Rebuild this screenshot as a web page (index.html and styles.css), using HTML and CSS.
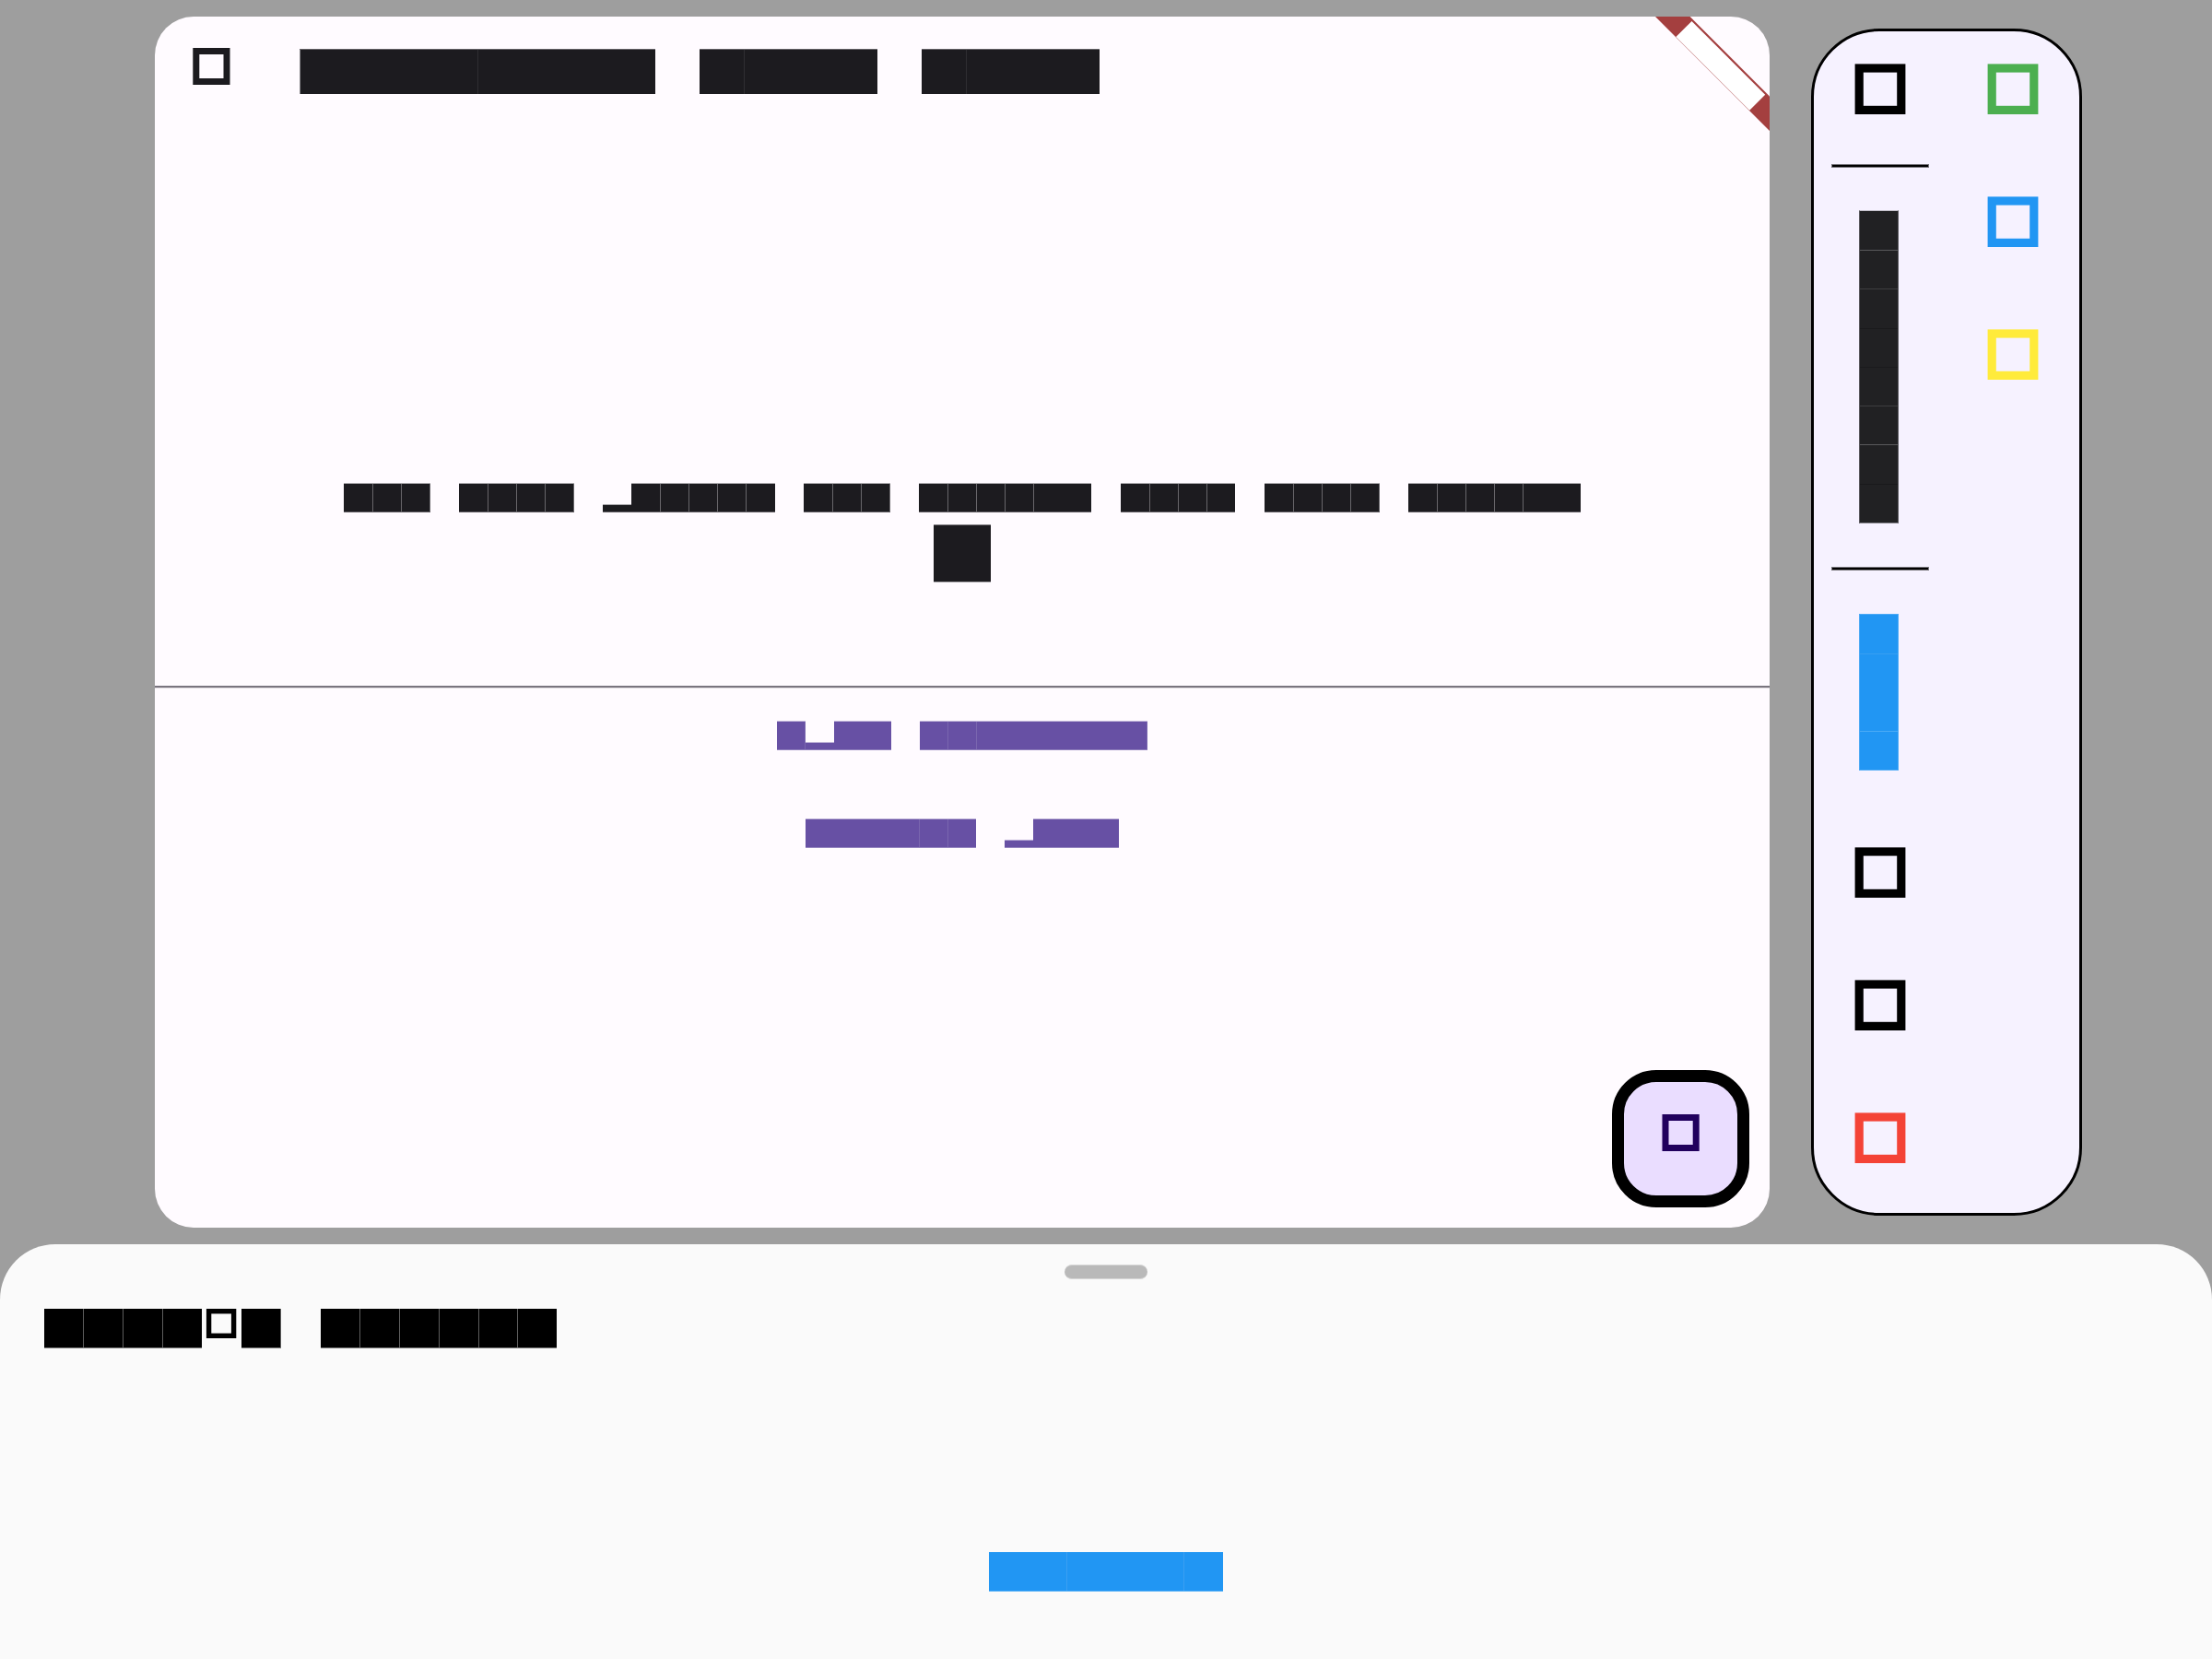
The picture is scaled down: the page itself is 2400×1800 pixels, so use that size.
FILE: index.html
```html
<!DOCTYPE html>
<html lang="en">
<head>
<meta charset="utf-8">
<title>Preview</title>
<link rel="stylesheet" href="styles.css">
</head>
<body>
<main class="stage">
  <section class="card">
    <header class="appbar">
      <svg class="lead" width="42" height="40"><rect x="3.8" y="3.5" width="33.2" height="33" fill="none" stroke="#1c1b1f" stroke-width="7"/></svg>
      <div class="line title">
        <span class="run n8 seam-mid"></span>
        <span class="run n4 seam-first"></span>
        <span class="run n4 seam-first"></span>
      </div>
    </header>
    <div class="line message">
      <span class="run n3"></span>
      <span class="run n4"></span>
      <span class="word"><span class="run low n1"></span><span class="run n5"></span></span>
      <span class="run n3"></span>
      <span class="run n6"></span>
      <span class="run n4"></span>
      <span class="run n4"></span>
      <span class="run n6"></span>
    </div>
    <div class="counter"></div>
    <div class="divider"></div>
    <div class="line action first">
      <span class="word"><span class="run n1"></span><span class="run low plain n1"></span><span class="run plain n2"></span></span>
      <span class="word"><span class="run n3"></span><span class="run plain n4 open"></span><span class="run n1"></span></span>
    </div>
    <div class="line action">
      <span class="word"><span class="run plain n3"></span><span class="run n3"></span></span>
      <span class="word"><span class="run low plain n1"></span><span class="run plain n3"></span></span>
    </div>
    <svg class="ribbon" width="124" height="124">
      <path d="M0 0H37.6L124 86.4V124Z" fill="#a43f3f"/>
      <path d="M22.4 21.9L39.5 4.9L119.2 84.8L102.2 101.8Z" fill="#fff"/>
    </svg>
    <button class="fab">
      <svg width="42" height="40"><rect x="4" y="3.5" width="33.2" height="33" fill="none" stroke="#21005d" stroke-width="7"/></svg>
    </button>
  </section>

  <aside class="panel">
    <div class="column">
      <svg class="tool" viewBox="0 0 56 56"><rect x="5.2" y="5" width="45.6" height="45.4"/></svg>
      <div class="rule"></div>
      <div class="label dark"><i></i><i class="s3"></i><i class="s2"></i><i class="s1"></i><i class="s1"></i><i class="s2"></i><i class="s3"></i><i class="s1"></i></div>
      <div class="rule"></div>
      <div class="label blue"><i></i><i class="s2"></i><i></i><i class="s3"></i></div>
      <div class="tools">
        <svg class="tool" viewBox="0 0 56 56"><rect x="5.2" y="5" width="45.6" height="45.4"/></svg>
        <svg class="tool" viewBox="0 0 56 56"><rect x="5.2" y="5" width="45.6" height="45.4"/></svg>
        <svg class="tool red" viewBox="0 0 56 56"><rect x="5.2" y="5" width="45.6" height="45.4"/></svg>
      </div>
    </div>
    <div class="column tools">
      <svg class="tool green" viewBox="0 0 56 56"><rect x="5.2" y="5" width="45.6" height="45.4"/></svg>
      <svg class="tool sky" viewBox="0 0 56 56"><rect x="5.2" y="5" width="45.6" height="45.4"/></svg>
      <svg class="tool yellow" viewBox="0 0 56 56"><rect x="5.2" y="5" width="45.6" height="45.4"/></svg>
    </div>
  </aside>
</main>

<section class="sheet">
  <div class="handle"></div>
  <div class="line heading">
    <span class="word"><span class="run n4"></span><svg class="glyph" viewBox="0 0 42.77 43"><rect x="7.6" y="2.7" width="27" height="26.6" fill="none" stroke="#000" stroke-width="5.4"/></svg><span class="run n1"></span></span>
    <span class="run n6"></span>
  </div>
  <div class="line submit"><span class="word"><span class="run plain n1"></span><span class="run n1"></span><span class="run plain n2"></span><span class="run n1"></span><span class="run plain n1"></span></span></div>
</section>
</body>
</html>
```
FILE: styles.css
```css
* { box-sizing: border-box; }

body {
  margin: 0;
  width: 2400px;
  height: 1800px;
  overflow: hidden;
  display: flex;
  flex-direction: column;
  background: #9e9e9e;
  font-family: Roboto, sans-serif;
}

svg { display: block; flex: none; }

.stage {
  display: flex;
  align-items: flex-start;
  gap: 45px;
  height: 1350px;
  padding: 18px 0 0 168px;
}

/* Rows of block characters; each run is --n cells wide */
.line { display: flex; gap: var(--cell); }
.word { display: flex; align-items: flex-end; }
.run {
  flex: none;
  width: calc(var(--n) * var(--cell));
  height: var(--tall);
  background: repeating-linear-gradient(to right,
    var(--seam) 0 .45px,
    transparent .45px calc(var(--cell) - .5px),
    var(--seam) calc(var(--cell) - .5px) var(--cell)) var(--ink);
  border: solid;
  border-width: var(--edge);
  border-color: var(--top) transparent var(--bottom);
  background-clip: padding-box;
}
.run.low { height: var(--drop); }
.run.plain { background: var(--ink); background-clip: padding-box; }
.n1 { --n: 1; }
.n2 { --n: 2; }
.n3 { --n: 3; }
.n4 { --n: 4; }
.n5 { --n: 5; }
.n6 { --n: 6; }
.n8 { --n: 8; }

.card {
  position: relative;
  display: flex;
  flex-direction: column;
  width: 1752px;
  height: 1314px;
  overflow: hidden;
  border-radius: 42px;
  background: #fffbff;
}

.appbar { display: flex; padding: 34px 0 0 41px; height: 506px; }
.title {
  --cell: 48.22px;
  --tall: 49px;
  --ink: #1c1b1f;
  --top: #68666a;
  --bottom: #1c1b1f;
  --edge: 1px 0 0;
  padding: 1px 0 0 74.3px;
}
.title .run { background: var(--ink); background-clip: padding-box; }
.title .seam-mid { background: linear-gradient(to right, #8d8b8f 1px, transparent 1px 193px, #2f2e32 193px 194px, transparent 194px) var(--ink); }
.title .seam-first { background: linear-gradient(to right, transparent 48px, #2f2e32 48px 49px, transparent 49px) var(--ink); }

.message {
  --cell: 31.21px;
  --tall: 32px;
  --drop: 9px;
  --ink: #1c1b1f;
  --seam: #68666a;
  --top: #a9a7ab;
  --bottom: #625f64;
  --edge: 1px 0;
  justify-content: center;
}

.counter {
  width: 62px;
  height: 63px;
  margin: 13px auto 0;
  background: #1c1b1f;
  border: solid #7a787c;
  border-width: 1px 0;
  border-bottom-color: #a9a7ab;
}

.divider {
  height: 3px;
  margin-top: 112px;
  background: #7a757f;
  border-bottom: 1px solid #dfdbe0;
}

.action {
  --cell: 30.92px;
  --tall: 32px;
  --drop: 9px;
  --ink: #6750a4;
  --seam: #7a66af;
  --top: #c2b7da;
  --bottom: #8e7dbb;
  --edge: 1px 0;
  justify-content: center;
  margin-top: 74px;
}
.action.first { margin-top: 35px; }

.ribbon { position: absolute; top: 0; right: 0; }

.fab {
  position: absolute;
  right: 22px;
  bottom: 22px;
  display: flex;
  align-items: flex-start;
  width: 149px;
  height: 149px;
  padding: 35px 0 0 41px;
  border: 13px solid #000;
  border-radius: 48px;
  background: #eaddff;
}

.panel {
  display: flex;
  gap: 38px;
  width: 294px;
  height: 1288px;
  margin-top: 13px;
  padding: 35px 0 0 19px;
  border: 3px solid #000;
  border-radius: 74px;
  background: #f6f2ff;
}
.column { display: flex; flex-direction: column; align-items: center; width: 106px; }
.tools { display: flex; flex-direction: column; align-items: center; gap: 88px; }
.tool { width: 56px; height: 56px; fill: none; stroke: #000; stroke-width: 9.2px; }
.red { stroke: #f44336; }
.green { stroke: #4caf50; }
.sky { stroke: #2196f3; }
.yellow { stroke: #ffeb3b; }

.rule {
  flex: none;
  width: 106px;
  height: 4px;
  background: #000;
  border: 1px solid #77757b;
}
.tool + .rule { margin-top: 53px; }

/* Vertical labels */
.label {
  display: flex;
  flex-direction: column;
  align-self: flex-start;
  flex: none;
  width: 43px;
  margin: 46px 0 47px 30px;
  border: 1px solid;
}
.label i { flex: 1; }
.dark { height: 340px; background: #212123; border-color: #c2bfc9 #59585d #8e8c93; }
.dark .s1 { border-top: 1px solid #1a1a1c; }
.dark .s2 { border-top: 1px solid #3d3d40; }
.dark .s3 { border-top: 1px solid #59595c; }
.blue { height: 170px; margin: 47px 0 83px 30px; background: #2196f3; border-color: #4daaf5; }
.dark i:first-child { flex: 0 0 42px; }
.blue .s2 { border-top: 1px solid #379ff2; }
.blue .s3 { border-top: 1px solid #4aaaf5; }

.sheet {
  display: flex;
  flex-direction: column;
  height: 450px;
  padding-top: 22px;
  border-radius: 60px 60px 0 0;
  background: #fafafa;
}
.handle {
  width: 90px;
  height: 16px;
  margin: 0 auto;
  border: solid #d8d8d8;
  border-width: 1px 0;
  border-radius: 8px;
  background: #b9b9b9;
}
.heading {
  --cell: 42.77px;
  --tall: 43px;
  --ink: #000;
  --seam: #5d5d5d;
  --top: #000;
  --bottom: #808080;
  --edge: 0 0 1px;
  padding-left: 48.2px;
  margin-top: 32px;
}
.glyph { width: 42.77px; height: 43px; }
.submit {
  --cell: 42.33px;
  --tall: 43px;
  --ink: #2196f3;
  --seam: #3a9ff2;
  --top: #2196f3;
  --bottom: #78bff6;
  --edge: 0 0 1px;
  justify-content: center;
  margin-top: 221px;
}
```
